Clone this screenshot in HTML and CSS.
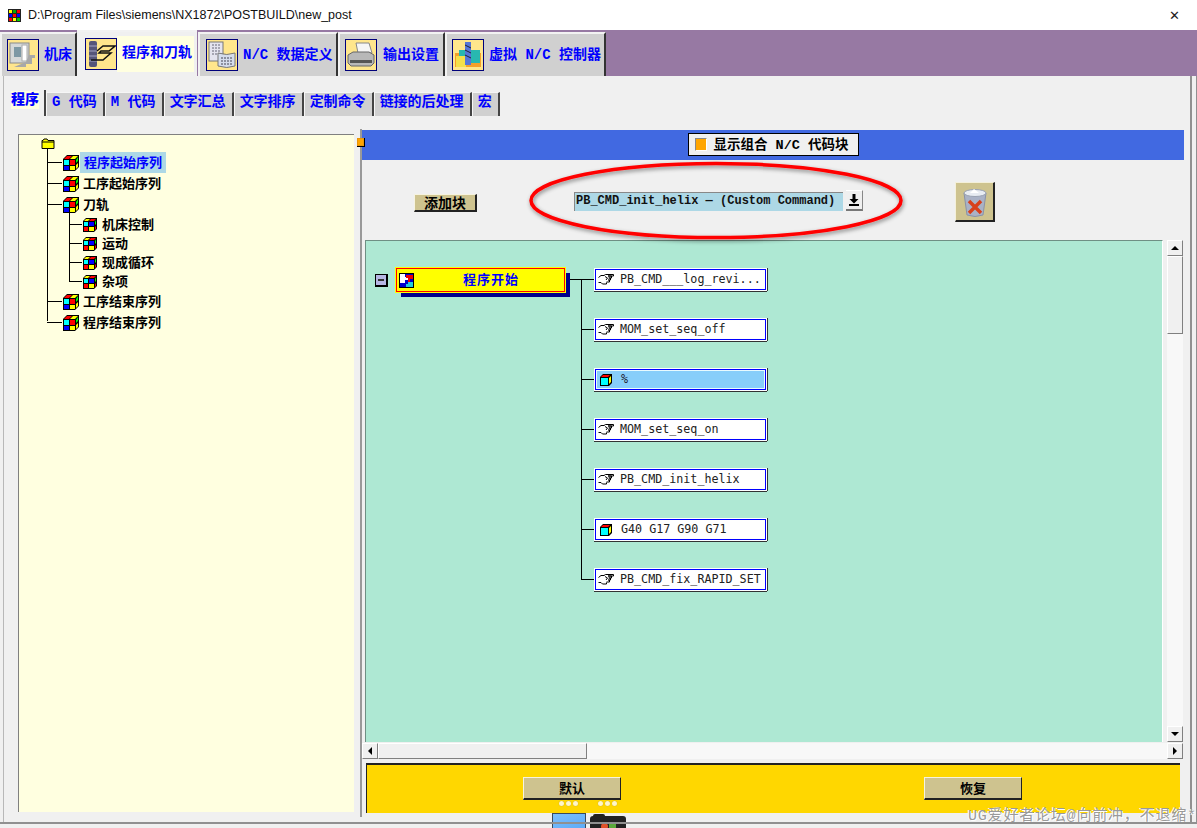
FILE: index.html
```html
<!DOCTYPE html>
<html lang="zh">
<head>
<meta charset="utf-8">
<title>new_post</title>
<link rel="stylesheet" href="styles.css">
</head>
<body>
<svg class="defs" width="0" height="0" aria-hidden="true">
  <symbol id="cube" viewBox="0 0 18 18">
    <path d="M1 5 5 1h12v12l-4 4H1z" fill="#000"/>
    <path d="M2 5 5 2h5L7 5z" fill="#f00"/><path d="M8 5l3-3h5l-3 3z" fill="#ff0"/>
    <path d="M14 6l2-3v4l-2 2z" fill="#0f0"/><path d="M14 11l2-2v4l-2 2z" fill="#ff0"/>
    <rect x="2" y="6" width="5" height="5" fill="#0ff"/><rect x="8" y="6" width="5" height="5" fill="#f00"/>
    <rect x="2" y="12" width="5" height="4" fill="#00f"/><rect x="8" y="12" width="5" height="4" fill="#ff0"/>
  </symbol>
  <symbol id="cubeb" viewBox="0 0 16 16">
    <path d="M1 4 4 1h11v11l-3 3H1z" fill="#000"/>
    <path d="M2 4l2-2h4L6 4z" fill="#ff0"/><path d="M7 4l2-2h5l-2 2z" fill="#f00"/>
    <path d="M13 5l1-2v4l-1 1z" fill="#0f0"/><path d="M13 10l1-1v3l-1 1z" fill="#f00"/>
    <rect x="2" y="5" width="4" height="4" fill="#0ff"/><rect x="7" y="5" width="5" height="4" fill="#00f"/>
    <rect x="2" y="10" width="4" height="4" fill="#f00"/><rect x="7" y="10" width="5" height="4" fill="#ff0"/>
  </symbol>
  <symbol id="block" viewBox="0 0 14 14">
    <path d="M1 4 4 1h9v9l-3 3H1z" fill="#000"/>
    <path d="M2 4l2-2h7L9 4z" fill="#f00"/><path d="M10 5l2-2v6l-2 2z" fill="#ff0"/>
    <rect x="2" y="5" width="7" height="7" fill="#0ff"/>
  </symbol>
  <symbol id="hand" viewBox="0 0 16 13">
    <g fill="none" stroke="#000" stroke-width="1">
      <path d="M.5 4.500 3 2.500h3l1.500-1h8v1.500H10"/>
      <path d="M10 3h3.500v2H10.500"/>
      <path d="M11 5h1.500v2H10"/>
      <path d="M10.500 7h1v2H8.500"/>
      <path d="M8.500 9.500v1.500H4.500L3 9.500H.5"/>
      <path d="M7 3.500l2.500 1.500L8 7"/>
    </g>
  </symbol>
</svg>

<header class="titlebar">
  <svg class="appicon" viewBox="0 0 13 13" width="13" height="13"><rect width="13" height="13" fill="#222"/><rect x="1" y="1" width="3" height="3" fill="#ff0"/><rect x="5" y="1" width="3" height="3" fill="#0a0"/><rect x="9" y="1" width="3" height="3" fill="#f00"/><rect x="1" y="5" width="3" height="3" fill="#00f"/><rect x="5" y="5" width="3" height="3" fill="#f00"/><rect x="9" y="5" width="3" height="3" fill="#00f"/><rect x="1" y="9" width="3" height="3" fill="#f00"/><rect x="5" y="9" width="3" height="3" fill="#ff0"/><rect x="9" y="9" width="3" height="3" fill="#0c0"/></svg>
  <span class="titletext">D:\Program Files\siemens\NX1872\POSTBUILD\new_post</span>
  <span class="close">✕</span>
</header>

<nav class="maintabs">
  <div class="mtab mtab-1">
    <span class="micon"><svg viewBox="0 0 30 30" width="30" height="30"><rect x="2" y="3" width="19" height="20" fill="#d5d8d8" stroke="#8a8a8a"/><rect x="6" y="7" width="7" height="10" fill="#7d98a4"/><rect x="14" y="5" width="5" height="16" fill="#fff" stroke="#aaa"/><path d="M21 15h6v3h-3v6h-6v3H6l12-5z" fill="#a8a8a8"/></svg></span>
    <span class="mlabel">机床</span>
  </div>
  <div class="mtab mtab-2 active">
    <span class="micon"><svg viewBox="0 0 30 30" width="30" height="30"><rect x="3" y="2" width="8" height="26" rx="2" fill="#55557a"/><path d="M3 7h8M3 12h8M3 17h8M3 22h8" stroke="#a5a5c5"/><path d="M11 12l6-5h12l-6 5H15l-2 2h12l-8 7H5" fill="none" stroke="#111" stroke-width="1.500"/></svg></span>
    <span class="mlabel">程序和刀轨</span>
  </div>
  <div class="mtab mtab-3">
    <span class="micon"><svg viewBox="0 0 30 30" width="30" height="30"><rect x="2" y="2" width="14" height="19" fill="#e4e4ef" stroke="#777"/><path d="M5 5h9M5 8h9M5 11h9M5 14h9" stroke="#667" stroke-dasharray="2 1"/><path d="M11 13q9 3 17 0v13q-8 3-17 0z" fill="#d4dcec" stroke="#777"/><path d="M14 18h11M14 21h11M14 24h11" stroke="#445" stroke-dasharray="2 1"/></svg></span>
    <span class="mlabel">N/C 数据定义</span>
  </div>
  <div class="mtab mtab-4">
    <span class="micon"><svg viewBox="0 0 30 30" width="30" height="30"><path d="M10 3h13l3 10H12z" fill="#f6f6f6" stroke="#888"/><path d="M2 15l5-3h16l5 3v8l-3 3H5l-3-3z" fill="#b8b8b8" stroke="#666"/><rect x="4" y="20" width="22" height="3" fill="#555"/></svg></span>
    <span class="mlabel">输出设置</span>
  </div>
  <div class="mtab mtab-5">
    <span class="micon"><svg viewBox="0 0 30 30" width="30" height="30"><path d="M2 13h26v14H2z" fill="#f5a02a"/><path d="M6 10h21v13H6z" fill="#28b8b0"/><path d="M3 16h10v11H3z" fill="#f4e04a"/><rect x="12" y="2" width="6" height="23" fill="#5576d8"/><path d="M12 5l6 3M12 10l6 3M12 15l6 3" stroke="#223"/></svg></span>
    <span class="mlabel">虚拟 N/C 控制器</span>
  </div>
</nav>

<main class="page">
  <div class="subtabs">
    <span class="stab active"><b>程序</b></span>
    <span class="stab">G 代码</span>
    <span class="stab">M 代码</span>
    <span class="stab">文字汇总</span>
    <span class="stab">文字排序</span>
    <span class="stab">定制命令</span>
    <span class="stab">链接的后处理</span>
    <span class="stab">宏</span>
  </div>

  <div class="panes">
    <aside class="tree">
      <svg class="folder" viewBox="0 0 14 12" width="14" height="12"><path d="M1 10.500V2.500h1l1-1.500h3l1 1.500h6v8z" fill="#ff0" stroke="#000"/><path d="M1 4h12" stroke="#000"/></svg>
      <ul class="tree-list">
        <li class="row row-root"><svg class="c18"><use href="#cube"/></svg><span class="nlabel sel">程序起始序列</span></li>
        <li class="row row-root"><svg class="c18"><use href="#cube"/></svg><span class="nlabel">工序起始序列</span></li>
        <li class="row row-root"><svg class="c18"><use href="#cube"/></svg><span class="nlabel">刀轨</span></li>
        <li class="sub">
          <ul class="sub-list">
            <li class="row row-sub"><svg class="c16"><use href="#cubeb"/></svg><span class="nlabel">机床控制</span></li>
            <li class="row row-sub"><svg class="c16"><use href="#cubeb"/></svg><span class="nlabel">运动</span></li>
            <li class="row row-sub"><svg class="c16"><use href="#cubeb"/></svg><span class="nlabel">现成循环</span></li>
            <li class="row row-sub"><svg class="c16"><use href="#cubeb"/></svg><span class="nlabel">杂项</span></li>
          </ul>
        </li>
        <li class="row row-root"><svg class="c18"><use href="#cube"/></svg><span class="nlabel">工序结束序列</span></li>
        <li class="row row-root"><svg class="c18"><use href="#cube"/></svg><span class="nlabel">程序结束序列</span></li>
      </ul>
    </aside>

    <div class="splitter"><i class="grip"></i></div>

    <section class="right">
      <div class="bluebar">
        <div class="combo-toggle"><i class="check"></i><span>显示组合 N/C 代码块</span></div>
      </div>

      <div class="toolbar">
        <button class="addbtn">添加块</button>
        <div class="picker">
          <span class="pick-value">PB_CMD_init_helix — (Custom Command)</span>
          <span class="pick-arrow"><svg viewBox="0 0 12 14" width="12" height="14"><path d="M4.500 1h3v5h3l-4.500 4.500L1.500 6h3z" fill="#000"/><rect x="1" y="11" width="10" height="2" fill="#000"/></svg></span>
        </div>
        <div class="trash">
          <svg viewBox="0 0 30 32" width="30" height="32"><path d="M4 7q11-6 22 0l-3 22q-8 3-16 0z" fill="#aab2c6" stroke="#8a92a6"/><ellipse cx="15" cy="7" rx="11" ry="3.500" fill="#e8ecf2" stroke="#9aa2b2"/><path d="M10 7l4-4 5 4z" fill="#fff"/><path d="M9 15l12 12M21 15L9 27" stroke="#d8401c" stroke-width="3.500"/></svg>
        </div>
      </div>

      <div class="canvas-wrap">
        <div class="canvas">
          <div class="diagram">
            <span class="toggle"></span>
            <div class="headblock">
              <svg class="puzzle" viewBox="0 0 15 15" width="15" height="15"><rect x=".5" y=".5" width="14" height="14" fill="#00c" stroke="#000"/><path d="M1 1h5v3h3v3H6v3H1z" fill="#fff"/><path d="M7 2h7v4h-3v3H9V5H7z" fill="#e00"/><path d="M9 9h5v5H7v-3h2z" fill="#2cd"/></svg>
              <span>程序开始</span>
            </div>
            <div class="trunk">
              <div class="node"><svg class="hand"><use href="#hand"/></svg><span>PB_CMD___log_revi...</span></div>
              <div class="node"><svg class="hand"><use href="#hand"/></svg><span>MOM_set_seq_off</span></div>
              <div class="node node-sel"><svg class="blk"><use href="#block"/></svg><span>%</span></div>
              <div class="node"><svg class="hand"><use href="#hand"/></svg><span>MOM_set_seq_on</span></div>
              <div class="node"><svg class="hand"><use href="#hand"/></svg><span>PB_CMD_init_helix</span></div>
              <div class="node"><svg class="blk"><use href="#block"/></svg><span>G40 G17 G90 G71</span></div>
              <div class="node"><svg class="hand"><use href="#hand"/></svg><span>PB_CMD_fix_RAPID_SET</span></div>
            </div>
          </div>
        </div>
        <div class="vscroll">
          <span class="sbtn"><i class="tri tri-up"></i></span>
          <span class="vthumb"></span>
          <span class="strack"></span>
          <span class="sbtn"><i class="tri tri-down"></i></span>
        </div>
        <div class="hscroll">
          <span class="sbtn"><i class="tri tri-left"></i></span>
          <span class="hthumb"></span>
          <span class="strack"></span>
          <span class="sbtn"><i class="tri tri-right"></i></span>
        </div>
      </div>

      <div class="footer">
        <button class="footbtn">默认</button>
        <button class="footbtn">恢复</button>
      </div>
    </section>
  </div>
</main>

<svg class="ellipse" viewBox="0 0 400 100" width="400" height="100" aria-hidden="true">
  <defs><filter id="sh" x="-5%" y="-20%" width="110%" height="140%"><feDropShadow dx="1" dy="2" stdDeviation="2" flood-color="#000" flood-opacity=".45"/></filter></defs>
  <ellipse cx="200" cy="48.500" rx="185" ry="37" fill="none" stroke="#f00" stroke-width="3.500" filter="url(#sh)"/>
</svg>

<div class="dots dots-a"><i></i><i></i><i></i></div>
<div class="dots dots-b"><i></i><i></i><i></i></div>
<div class="monitor"></div>
<div class="camera"><i></i><i></i></div>
<div class="watermark">UG爱好者论坛@向前冲，不退缩*</div>
</body>
</html>
```

FILE: styles.css
```css
* { box-sizing: border-box; }
html, body { margin: 0; padding: 0; }
body {
  width: 1197px; height: 828px; overflow: hidden; position: relative;
  background: #f0f0f0;
  font-family: "Noto Sans CJK SC", "DejaVu Sans", sans-serif;
}
.defs { position: absolute; }
ul { list-style: none; margin: 0; padding: 0; }
button { font: inherit; margin: 0; padding: 0; }

.titlebar {
  height: 30px; background: #fff; display: flex; align-items: center;
  padding-left: 8px; font-family: "Liberation Sans", sans-serif; font-size: 12.500px; color: #111;
}
.appicon { margin-right: 7px; }
.titletext { flex: 1; }
.close { width: 46px; text-align: center; font-size: 13px; color: #222; }

.maintabs { height: 46px; background: #9779a3; display: flex; align-items: flex-end; }
.mtab {
  height: 44px; background: #d0d0d0; display: flex; align-items: center; gap: 5px; flex: none;
  border-top: 2px solid #f2f2f2; border-left: 2px solid #f2f2f2; border-right: 2px solid #333;
  color: #00f; font: 700 14px "Liberation Mono", "Noto Sans CJK SC", monospace; white-space: pre;
}
.mlabel { margin-top: -4px; }
.mtab-1 { width: 77px; padding-left: 5px; }
.mtab-2 { width: 120px; height: 46px; padding-left: 8px; background: #f0f0f0; border-right: 0; border-left: 0; gap: 0; }
.mtab-3 { width: 140px; margin-left: 1px; padding-left: 6px; }
.mtab-4 { width: 107px; padding-left: 5px; gap: 6px; }
.mtab-5 { width: 161px; padding-left: 5px; }
.micon {
  width: 32px; height: 32px; flex: none; background: #ffe68c; border: 1px solid #00007a;
  display: flex; align-items: center; justify-content: center;
}
.mtab-2 .mlabel { background: #ffffe0; height: 36px; line-height: 34px; width: 77px; padding-left: 5px; margin-top: 0; }

.page { padding: 14px 0 0; height: 752px; }
.page::before { content: ""; position: absolute; left: 3px; top: 76px; width: 1px; height: 747px; background: #b8b8b8; }

.subtabs { display: flex; align-items: flex-end; height: 26px; padding-left: 7px; }
.stab {
  height: 24px; background: #d0d0d0; color: #00f; font: 700 14px/19px "Liberation Mono", "Noto Sans CJK SC", monospace;
  border-top: 1px solid #f6f6f6; border-left: 1px solid #f6f6f6; border-right: 2px solid #444;
  padding: 0 6px 0 5px; white-space: pre; text-align: center; flex: none;
}
.stab.active { height: 26px; width: 39px; background: #f0f0f0; border: 0; border-right: 2px solid #444; padding: 1px 0 0 4px; }
.stab.active b { display: block; background: #ffffe0; line-height: 18px; height: 18px; width: 28px; }

.panes { display: flex; height: 696px; padding: 18px 0 0 18px; }

.tree {
  width: 336px; height: 678px; flex: none; background: #ffffe0;
  border-top: 1px solid #808080; border-left: 1px solid #808080; padding: 3px 0 0 22px;
}
.folder { display: block; }
.tree-list { position: relative; margin-top: 2px; padding-left: 6px; }
.tree-list::before { content: ""; position: absolute; left: 6px; top: -4px; height: 173px; border-left: 1px solid #000; }
.row { display: flex; align-items: center; position: relative; }
.row-root { height: 21px; padding-left: 15px; }
.row-root::before { content: ""; position: absolute; left: 0; top: 10px; width: 15px; border-top: 1px solid #000; }
.c18 { width: 18px; height: 18px; flex: none; }
.c16 { width: 16px; height: 16px; flex: none; }
.nlabel { font-size: 13px; font-weight: 700; color: #000; margin-left: 3px; line-height: 18px; padding-bottom: 2px; }
.nlabel.sel { color: #00f; background: #add8e6; padding: 0 4px; margin-left: 0; height: 21px; line-height: 19px; }
.sub { padding-left: 22px; }
.sub-list { position: relative; }
.sub-list::before { content: ""; position: absolute; left: 0; top: -3px; height: 70px; border-left: 1px solid #000; }
.row-sub { height: 19px; padding-left: 13px; }
.row-sub::before { content: ""; position: absolute; left: 0; top: 9px; width: 13px; border-top: 1px solid #000; }
.row-sub .nlabel { margin-left: 4px; }

.splitter { width: 8px; height: 688px; flex: none; position: relative; border-right: 2px solid #999; margin-top: -5px; }
.grip { position: absolute; left: 3px; top: 9px; width: 8px; height: 9px; background: #ffa500; border: 1px solid #000; border-width: 0 1px 1px 0; box-shadow: inset 0 0 0 1px #e8950a; z-index: 2; }

.right { width: 822px; flex: none; margin-top: -4px; position: relative; }
.bluebar { height: 30px; background: #4169e1; display: flex; justify-content: center; align-items: flex-start; padding-top: 3px; }
.combo-toggle {
  width: 171px; height: 23px; border: 1px solid #000; display: flex; align-items: center;
  font: 700 13.500px "Liberation Mono", "Noto Sans CJK SC", monospace; white-space: pre; padding-left: 6px; gap: 7px; background: #f0f0f0;
}
.combo-toggle span { margin-top: -3px; }
.check { width: 12px; height: 13px; background: #ffa500; border: 1px solid #888; border-right-color: #fff; border-bottom-color: #fff; flex: none; }

.toolbar { height: 80px; display: flex; align-items: flex-start; }
.addbtn {
  width: 63px; height: 18px; background: #cec38f; margin: 34px 0 0 52px; border: 0;
  border-top: 1px solid #f6f3e0; border-left: 1px solid #f6f3e0; border-right: 2px solid #222; border-bottom: 2px solid #222;
  font-size: 14px; font-weight: 700; line-height: 13px; color: #000;
}
.picker { display: flex; margin: 30px 0 0 97px; height: 23px; }
.pick-value {
  width: 269px; height: 19px; margin-top: 2px; background: #add8e6; border-left: 1px solid #888; border-top: 1px solid #888;
  font: 700 12px/16px "Liberation Mono", monospace; color: #111; white-space: pre; padding-left: 1px; overflow: hidden;
}
.pick-arrow { width: 17px; height: 21px; margin-left: 3px; background: #f0f0f0; border-right: 1px solid #888; border-bottom: 2px solid #777; border-top: 1px solid #fff; display: flex; align-items: center; justify-content: center; }
.trash {
  width: 40px; height: 40px; background: #cec38f; margin: 22px 0 0 92px; flex: none;
  border-top: 1px solid #f4f0da; border-left: 1px solid #f4f0da; border-right: 2px solid #222; border-bottom: 2px solid #222;
  display: flex; align-items: center; justify-content: center;
}

.canvas-wrap {
  display: grid; grid-template-columns: 798px 16px; grid-template-rows: 502px 17px; column-gap: 4px;
  padding-left: 3px; height: 519px;
}
.canvas { background: #aee8d3; border-top: 1px solid #6f8f84; border-left: 1px solid #6f8f84; border-right: 1px solid #fff; grid-column: 1; grid-row: 1; overflow: hidden; }
.diagram { padding: 27px 0 0 9px; display: flex; }
.toggle {
  width: 13px; height: 13px; background: #b6b6e4; border: 1px solid #000; border-right-width: 2px; border-bottom-width: 2px;
  margin: 6px 8px 0 0; flex: none; position: relative;
}
.toggle::after { content: ""; position: absolute; left: 2px; top: 4px; width: 6px; border-top: 2px solid #333; }
.headblock {
  width: 169px; height: 24px; background: #ff0; box-shadow: 1px 1px 0 #ff0, 5px 5px 0 #00008b; display: flex; align-items: center; flex: none;
  border: 1px solid #f00; outline: 1px solid #ff0; color: #00f; font-weight: 700; font-size: 13px; padding-left: 2px;
}
.headblock span { flex: 1; text-align: center; letter-spacing: 1px; padding: 0 0 3px 4px; }
.puzzle { flex: none; }
.trunk { margin: 1px 0 0 16px; padding-left: 14px; position: relative; display: flex; flex-direction: column; gap: 29px; }
.trunk::before { content: ""; position: absolute; left: 0; top: 10px; height: 301px; border-left: 1px solid #000; }
.trunk::after { content: ""; position: absolute; left: -11px; top: 10px; width: 11px; border-top: 1px solid #000; }
.node {
  width: 171px; height: 21px; background: #fff; position: relative; display: flex; align-items: center; padding-left: 2px; gap: 6px; flex: none;
  border: 1px solid #00f; box-shadow: 0 0 0 1px #fff, 0 1px 0 1px #333, 1px 0 0 1px #333;
  font: 11.700px/1 "DejaVu Sans Mono", monospace; color: #222; white-space: pre;
}
.node::before { content: ""; position: absolute; left: -15px; top: 9px; width: 13px; border-top: 1px solid #000; }
.node-sel { background: #87cefa; color: #223; outline: 1px solid #e8fbff; outline-offset: -2px; }
.hand { width: 16px; height: 13px; flex: none; }
.blk { width: 14px; height: 14px; flex: none; margin: 0 2px 0 1px; }

.vscroll { grid-column: 2; grid-row: 1; display: flex; flex-direction: column; }
.hscroll { grid-column: 1 / span 2; grid-row: 2; display: flex; margin: 1px 0 0 -3px; width: 821px; }
.sbtn {
  width: 16px; height: 16px; flex: none; background: #f0f0f0; display: flex; align-items: center; justify-content: center;
  border-top: 1px solid #fff; border-left: 1px solid #fff; border-right: 1px solid #808080; border-bottom: 1px solid #808080;
}
.vthumb { height: 78px; flex: none; background: #f0f0f0; border-top: 1px solid #fff; border-left: 1px solid #fff; border-right: 1px solid #808080; border-bottom: 1px solid #808080; }
.hthumb { width: 209px; flex: none; background: #f0f0f0; border-top: 1px solid #fff; border-left: 1px solid #fff; border-right: 1px solid #808080; border-bottom: 1px solid #808080; }
.strack { flex: 1; background: #f8f8f8; }
.tri { width: 0; height: 0; border: 4px solid transparent; display: block; }
.tri-up { border-bottom-color: #000; border-top-width: 0; }
.tri-down { border-top-color: #000; border-bottom-width: 0; }
.tri-left { border-right-color: #000; border-left-width: 0; }
.tri-right { border-left-color: #000; border-right-width: 0; }

.footer {
  height: 50px; width: 814px; margin: 4px 0 0 4px; background: #ffd700; border-top: 2px solid #222; border-left: 1px solid #222;
  display: flex; padding: 12px 0 0 156px; gap: 303px;
}
.footbtn {
  width: 98px; height: 23px; background: #cec38f; color: #000; font-weight: 700; font-size: 13px; line-height: 18px;
  border: 0; border-top: 1px solid #f6f3e0; border-left: 1px solid #f6f3e0; border-right: 1px solid #222; border-bottom: 2px solid #222;
}

.ellipse { position: absolute; left: 516px; top: 152px; pointer-events: none; }
.dots { position: absolute; top: 801px; display: flex; gap: 2px; }
.dots i { width: 5px; height: 5px; border-radius: 50%; background: #fff6c8; box-shadow: 0 0 1px #a8912a; }
.dots-a { left: 559px; }
.dots-b { left: 598px; }
.monitor { position: absolute; left: 552px; top: 813px; width: 34px; height: 20px; background: linear-gradient(160deg, #7bbfff, #5aa8f5); border: 1px solid #3a4a5c; }
.camera { position: absolute; left: 590px; top: 816px; width: 36px; height: 14px; background: #222; border-radius: 3px 3px 0 0; }
.camera::before { content: ""; position: absolute; left: 3px; top: -2px; width: 12px; height: 4px; background: #222; border-radius: 2px 2px 0 0; }
.camera i { position: absolute; top: 7px; width: 7px; height: 7px; border-radius: 50%; background: #e0522a; left: 11px; }
.camera i + i { background: #5aa83a; left: 19px; border-radius: 1px; }
.watermark {
  position: absolute; left: 968px; top: 807px; height: 20px; white-space: nowrap;
  font: 15px/20px "Liberation Mono", "Noto Sans CJK SC", monospace; color: #9a9a9a; letter-spacing: .8px;
  text-shadow: 1px 1px 0 #fff, -1px 0 0 #fff;
}
body::before { content: ""; position: absolute; left: 1190px; top: 76px; width: 2px; height: 748px; background: #909090; box-shadow: 6px 0 0 #909090; }
body::after { content: ""; position: absolute; left: 0; top: 822px; width: 1197px; height: 2px; background: #909090; }
```
